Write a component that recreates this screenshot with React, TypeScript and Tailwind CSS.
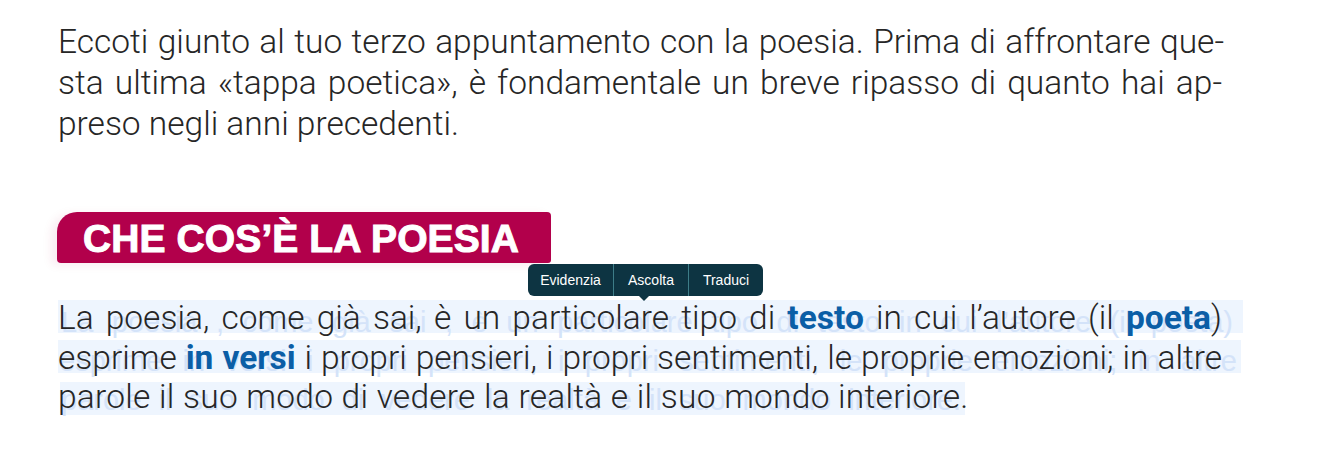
import React from "react";

const Ghost = ({ text, className }: { text: string; className: string }) => (
  <div
    className={
      "absolute whitespace-nowrap font-['Liberation_Sans',Arial,sans-serif] text-[29px] leading-[40px] text-[#d4e3f9] text-justify [text-align-last:justify] " +
      className
    }
  >
    {text}
  </div>
);

const B = ({ children }: { children: React.ReactNode }) => (
  <span className="font-bold text-[#0b5ea6]">{children}</span>
);

export default function App() {
  return (
    <div className="relative w-[1335px] h-[458px] overflow-hidden bg-white">
      {/* intro paragraph */}
      <div className="pl-[58px] pt-[21px] font-['Roboto',sans-serif] font-light text-[33.5px] leading-[41px] text-[#262626]">
        <div className="w-[1166px] text-justify [text-align-last:justify]">
          Eccoti giunto al tuo terzo appuntamento con la poesia. Prima di affrontare que-
        </div>
        <div className="w-[1164px] text-justify [text-align-last:justify]">
          sta ultima «tappa poetica», è fondamentale un breve ripasso di quanto hai ap-
        </div>
        <div>preso negli anni precedenti.</div>
      </div>

      {/* heading badge */}
      <div className="mt-[68px] ml-[57px] w-[494px] h-[51px] pt-[3px] pl-[26px] bg-[#b2004b] rounded-tl-[20px] rounded-tr-[4px] rounded-br-[3px] rounded-bl-[4px] shadow-[-6px_2px_10px_rgba(178,0,75,0.08)]">
        <div className="font-['Liberation_Sans',Arial,sans-serif] font-bold text-[39px] leading-[48px] text-white tracking-[0.1px] [-webkit-text-stroke:1px_white] whitespace-nowrap">
          CHE COS’È LA POESIA
        </div>
      </div>

      {/* selected paragraph */}
      <div className="mt-[35px] pl-[58px] font-['Roboto',sans-serif] font-light text-[33.5px] leading-[40px] text-[#262626]">
        <div className="relative h-[40px]">
          <div className="absolute left-0 top-[2px] h-[33px] w-[1185px] bg-[#eef5fe]" />
          <Ghost
            className="left-[3px] top-[4px] w-[1172px]"
            text="La poesia , come già sai , è un particolare tipo di testo in cui l’autore (il poeta)"
          />
          <div className="relative w-[1164px] text-justify [text-align-last:justify]">
            La poesia, come già sai, è un particolare tipo di <B>testo</B> in cui l’autore (il <B>poeta</B>)
          </div>
        </div>
        <div className="relative h-[39px]">
          <div className="absolute left-0 top-[2px] h-[33px] w-[1183px] bg-[#eef5fe]" />
          <Ghost
            className="left-[1px] top-[3px] w-[1178px]"
            text="esprime in versi i propri pensieri, i propri sentimenti, le proprie emozioni; in altre"
          />
          <div className="relative w-[1164px] text-justify [text-align-last:justify]">
            esprime <B>in versi</B> i propri pensieri, i propri sentimenti, le proprie emozioni; in altre
          </div>
        </div>
        <div className="relative h-[40px]">
          <div className="absolute left-[2px] top-[5px] h-[33px] w-[905px] bg-[#eef5fe]" />
          <Ghost
            className="left-[3px] top-[3px] w-[900px]"
            text="parole il suo modo di vedere la realtà e il suo mondo interiore."
          />
          <div className="relative tracking-[0.25px]">
            parole il suo modo di vedere la realtà e il suo mondo interiore.
          </div>
        </div>
      </div>

      {/* floating toolbar */}
      <div className="absolute left-[528px] top-[264px] flex h-[32px] items-center rounded-[6px] bg-[#0d3442] font-['Liberation_Sans',Arial,sans-serif] text-[14px] text-white">
        <div className="flex h-full w-[86px] items-center justify-center border-r border-[#3d7d88]">Evidenzia</div>
        <div className="flex h-full w-[75px] items-center justify-center border-r border-[#3d7d88]">Ascolta</div>
        <div className="flex h-full w-[74px] items-center justify-center">Traduci</div>
        <div className="absolute left-[110px] top-[31px] h-0 w-0 border-x-[6px] border-t-[6px] border-x-transparent border-t-[#0d3442]" />
      </div>
    </div>
  );
}
